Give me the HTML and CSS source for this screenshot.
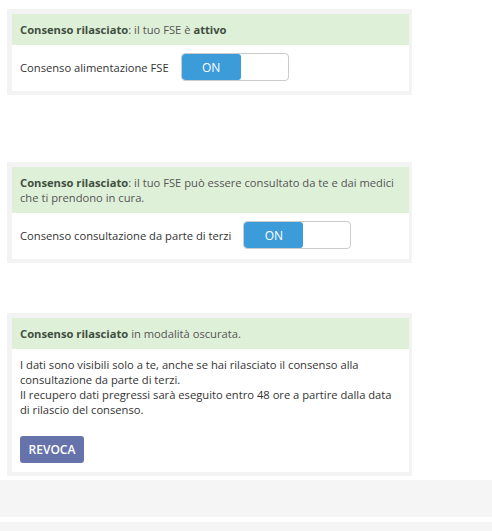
FILE: index.html
```html
<!DOCTYPE html>
<html lang="it">
<head>
  <meta charset="UTF-8">
  <meta name="viewport" content="width=device-width, initial-scale=1.0">
  <title>Consensi FSE</title>
  <link rel="stylesheet" href="styles.css">
</head>
<body>
  <div class="page">

    <!-- Consenso alimentazione -->
    <div class="card card-first">
      <div class="card-head"><b>Consenso rilasciato</b>: il tuo FSE è <b>attivo</b></div>
      <div class="card-row">
        <span class="label">Consenso alimentazione FSE</span>
        <div class="switch"><span class="switch-on">ON</span><span class="switch-off"></span></div>
      </div>
    </div>

    <!-- Consenso consultazione -->
    <div class="card card-second">
      <div class="card-head"><b>Consenso rilasciato</b>: il tuo FSE può essere consultato da te e dai medici<br>che ti prendono in cura.</div>
      <div class="card-row">
        <span class="label">Consenso consultazione da parte di terzi</span>
        <div class="switch"><span class="switch-on">ON</span><span class="switch-off"></span></div>
      </div>
    </div>

    <!-- Oscuramento -->
    <div class="card card-third">
      <div class="card-head"><b>Consenso rilasciato</b> in modalità oscurata.</div>
      <div class="card-body">
        <p>I dati sono visibili solo a te, anche se hai rilasciato il consenso alla<br>consultazione da parte di terzi.<br>Il recupero dati pregressi sarà eseguito entro 48 ore a partire dalla data<br>di rilascio del consenso.</p>
        <button class="btn-revoca">REVOCA</button>
      </div>
    </div>
  </div>

  <div class="footer-band"></div>
  <div class="footer-bottom"></div>
</body>
</html>
```

FILE: styles.css
```css
body {
  margin: 0;
  font-family: "Open Sans", Arial, sans-serif;
  font-size: 11.2px;
  color: #333;
  background: #fff;
}
.page {
  padding: 0 0 4px 7px;
}
.card {
  width: 405px;
  box-sizing: border-box;
  background-color: #fff;
  border-style: solid;
  border-color: #f3f3f3;
  border-width: 5px 3px 4px 5px;
}
.card-first { margin-top: 9px; }
.card-second { margin-top: 67px; }
.card-third { margin-top: 50px; }
.card-head {
  background-color: #dff0d8;
  color: #555;
  padding: 8px 8px;
  line-height: 15px;
}
.card-head b {
  font-weight: 700;
  color: #3f4f3f;
}
.card-row {
  display: flex;
  align-items: center;
  gap: 12px;
  padding: 8px 8px 10px;
}
.label { color: #333; }
.switch {
  display: flex;
  width: 108px;
  height: 28px;
  box-sizing: border-box;
  border: 1px solid #ccc;
  border-radius: 4px;
  overflow: hidden;
}
.switch-on {
  width: 59px;
  background-color: #3c9bd9;
  color: #fff;
  display: flex;
  align-items: center;
  justify-content: center;
  font-size: 12px;
  border-radius: 3px;
}
.switch-off { flex: 1; }
.card-body {
  padding: 8px 8px 9px;
}
.card-body p {
  margin: 0 0 19px;
  line-height: 15px;
}
.btn-revoca {
  display: block;
  width: 64px;
  height: 27px;
  border: none;
  border-radius: 3px;
  background-color: #6673ab;
  color: #fff;
  font-family: "Open Sans", Arial, sans-serif;
  font-size: 12px;
  font-weight: 600;
  padding: 0;
}
.footer-band {
  height: 37px;
  background-color: #f5f5f5;
}
.footer-bottom {
  margin-top: 5px;
  height: 20px;
  background-color: #f5f5f5;
}
```
